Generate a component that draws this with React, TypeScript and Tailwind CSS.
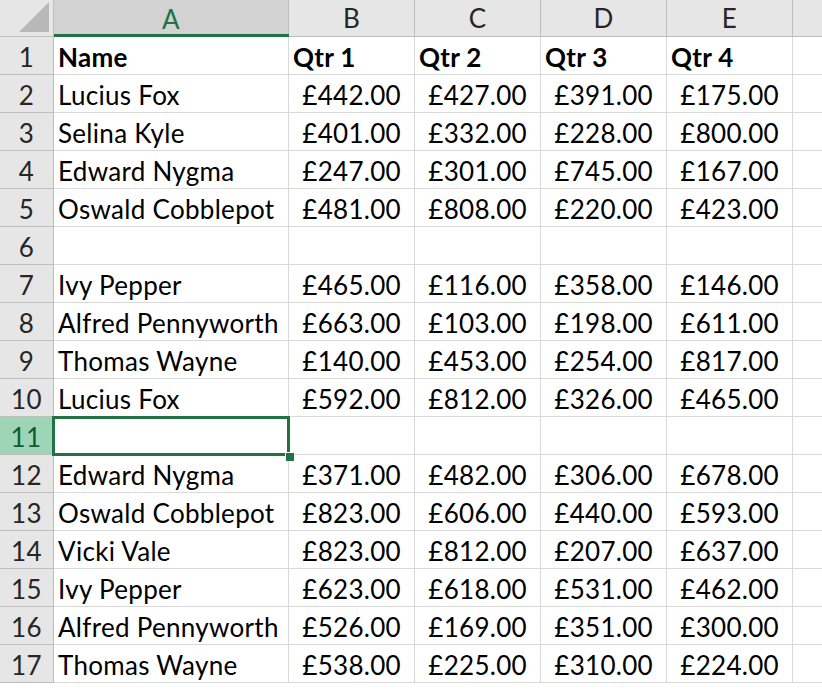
import React from "react";

const rows: (string[] | null)[] = [
  ["Lucius Fox", "£442.00", "£427.00", "£391.00", "£175.00"],
  ["Selina Kyle", "£401.00", "£332.00", "£228.00", "£800.00"],
  ["Edward Nygma", "£247.00", "£301.00", "£745.00", "£167.00"],
  ["Oswald Cobblepot", "£481.00", "£808.00", "£220.00", "£423.00"],
  null,
  ["Ivy Pepper", "£465.00", "£116.00", "£358.00", "£146.00"],
  ["Alfred Pennyworth", "£663.00", "£103.00", "£198.00", "£611.00"],
  ["Thomas Wayne", "£140.00", "£453.00", "£254.00", "£817.00"],
  ["Lucius Fox", "£592.00", "£812.00", "£326.00", "£465.00"],
  null,
  ["Edward Nygma", "£371.00", "£482.00", "£306.00", "£678.00"],
  ["Oswald Cobblepot", "£823.00", "£606.00", "£440.00", "£593.00"],
  ["Vicki Vale", "£823.00", "£812.00", "£207.00", "£637.00"],
  ["Ivy Pepper", "£623.00", "£618.00", "£531.00", "£462.00"],
  ["Alfred Pennyworth", "£526.00", "£169.00", "£351.00", "£300.00"],
  ["Thomas Wayne", "£538.00", "£225.00", "£310.00", "£224.00"],
];

const gridCols = "grid grid-cols-[54px_235px_126px_126px_126px_126px_1fr]";

function HeaderRow() {
  const letters = ["B", "C", "D", "E"];
  return (
    <div className={`${gridCols} h-[37px]`}>
      <div className="relative bg-[#e6e6e6] border-r border-b border-[#bdbdbd]">
        <svg className="absolute right-[4px] bottom-[4px]" width="30" height="30" viewBox="0 0 30 30">
          <polygon points="30,0 30,30 0,30" fill="#b8b8b8" />
        </svg>
      </div>
      <div className="relative bg-[#d2d2d2] border-r border-[#bdbdbd] flex items-center justify-center text-[#217346] text-[26px]">
        A
        <div className="absolute left-0 right-[-1px] bottom-0 h-[3px] bg-[#217346]" />
      </div>
      {letters.map((l) => (
        <div key={l} className="bg-[#e6e6e6] border-r border-b border-[#bdbdbd] flex items-center justify-center text-[#262626] text-[26px]">
          {l}
        </div>
      ))}
      <div className="bg-[#e6e6e6] border-b border-[#bdbdbd]" />
    </div>
  );
}

function DataRow({ n, cells, bold, selected }: { n: number; cells: string[] | null; bold?: boolean; selected?: boolean }) {
  const c = cells ?? ["", "", "", "", ""];
  return (
    <div className={`${gridCols} h-[38px]`}>
      <div
        className={
          selected
            ? "bg-[#9fd5b7] border-r-2 border-r-[#217346] border-b border-b-[#bdbdbd] flex items-center justify-center text-[#0f5e33] text-[26px] pt-[2px]"
            : "bg-[#e6e6e6] border-r border-b border-[#bdbdbd] flex items-center justify-center text-[#262626] text-[26px] pt-[2px]"
        }
      >
        {n}
      </div>
      <div className={`relative border-r border-b border-[#d9d9d9] flex items-center pl-[4px] pt-[3px] whitespace-nowrap ${bold ? "font-bold" : ""}`}>
        {c[0]}
        {selected && (
          <>
            <div className="absolute z-10 left-[-2px] top-[-1px] right-[-2px] bottom-[-2px] border-[3px] border-[#217346]" />
            <div className="absolute z-20 right-[-6px] bottom-[-7px] w-[9px] h-[9px] bg-[#217346] border-l border-t border-white" />
          </>
        )}
      </div>
      {c.slice(1).map((v, i) => (
        <div
          key={i}
          className={`border-r border-b border-[#d9d9d9] flex items-center pt-[3px] whitespace-nowrap ${bold ? "font-bold pl-[4px]" : "justify-end pr-[13px]"}`}
        >
          {v}
        </div>
      ))}
      <div className="border-b border-[#d9d9d9]" />
    </div>
  );
}

export default function App() {
  return (
    <div className="w-[822px] h-[692px] overflow-hidden bg-white text-black text-[26px] tracking-[0.3px] leading-none font-['Lato','Noto_Sans',sans-serif]">
      <HeaderRow />
      <DataRow n={1} cells={["Name", "Qtr 1", "Qtr 2", "Qtr 3", "Qtr 4"]} bold />
      {rows.map((r, i) => (
        <DataRow key={i} n={i + 2} cells={r} selected={i + 2 === 11} />
      ))}
    </div>
  );
}
